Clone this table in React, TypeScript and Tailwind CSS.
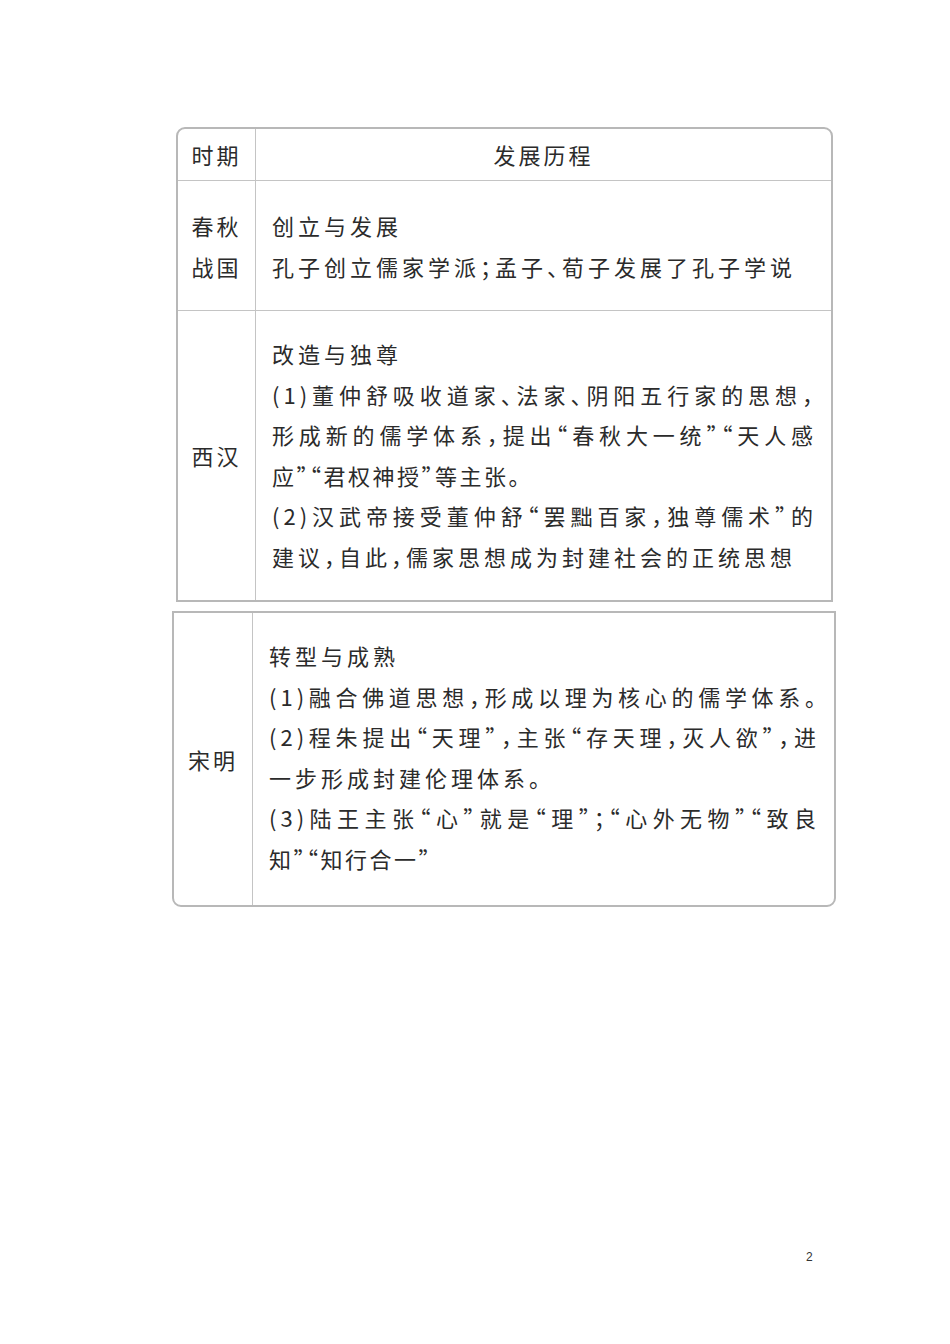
import React from 'react';

const font = "font-['Noto_Sans_CJK_SC',sans-serif] [font-feature-settings:'halt']";

// full lines are justified edge to edge, the last line of a paragraph is not
const Full = ({ children }: { children: React.ReactNode }) => (
  <div className="text-justify [text-align-last:justify]">{children}</div>
);
const Line = ({ children, tight }: { children: React.ReactNode; tight?: boolean }) => (
  <div className={tight ? 'tracking-[2.5px]' : ''}>{children}</div>
);

export default function App() {
  return (
    <div className={`w-[950px] h-[1344px] bg-white relative text-[#2b2b2b] ${font}`}>
      <div className="pt-[127px]">
        {/* first table */}
        <div className="ml-[176px] w-[657px] border-2 border-[#b8b8b8] rounded-t-[9px] text-[22px] tracking-[4px] leading-[40.5px]">
          <div className="grid grid-cols-[78px_1fr] border-b-[1.5px] border-[#c4c4c4]">
            <div className="border-r-[1.5px] border-[#c4c4c4] h-[51px] flex items-center justify-center tracking-[3px]">时期</div>
            <div className="flex items-center justify-center tracking-[3px]">发展历程</div>
          </div>
          <div className="grid grid-cols-[78px_1fr] border-b-[1.5px] border-[#c4c4c4]">
            <div className="border-r-[1.5px] border-[#c4c4c4] flex flex-col items-center justify-center tracking-[3px]">
              <div>春秋</div>
              <div>战国</div>
            </div>
            <div className="pl-[16px] pr-[14px] pt-[24px] pb-[24px]">
              <Line>创立与发展</Line>
              <Line>孔子创立儒家学派；孟子、荀子发展了孔子学说</Line>
            </div>
          </div>
          <div className="grid grid-cols-[78px_1fr]">
            <div className="border-r-[1.5px] border-[#c4c4c4] flex items-center justify-center tracking-[3px]">西汉</div>
            <div className="pl-[16px] pr-[14px] pt-[22px] pb-[24px]">
              <Line>改造与独尊</Line>
              <Full>(1)董仲舒吸收道家、法家、阴阳五行家的思想，</Full>
              <Full>形成新的儒学体系，提出“春秋大一统”“天人感</Full>
              <Line tight>应”“君权神授”等主张。</Line>
              <Full>(2)汉武帝接受董仲舒“罢黜百家，独尊儒术”的</Full>
              <Line>建议，自此，儒家思想成为封建社会的正统思想</Line>
            </div>
          </div>
        </div>

        {/* second table */}
        <div className="mt-[9px] ml-[172px] w-[664px] border-2 border-[#b8b8b8] rounded-b-[9px] text-[22px] tracking-[4px] leading-[40.5px]">
          <div className="grid grid-cols-[79px_1fr]">
            <div className="border-r-[1.5px] border-[#c4c4c4] flex items-center justify-center tracking-[3px]">宋明</div>
            <div className="pl-[16px] pr-[14px] pt-[22px] pb-[27px]">
              <Line>转型与成熟</Line>
              <Full>(1)融合佛道思想，形成以理为核心的儒学体系。</Full>
              <Full>(2)程朱提出“天理”，主张“存天理，灭人欲”，进</Full>
              <Line>一步形成封建伦理体系。</Line>
              <Full>(3)陆王主张“心”就是“理”；“心外无物”“致良</Full>
              <Line tight>知”“知行合一”</Line>
            </div>
          </div>
        </div>
      </div>

      {/* page number */}
      <div className="absolute left-[806px] top-[1248px] text-[12px] font-['Liberation_Sans',sans-serif] text-[#333]">2</div>
    </div>
  );
}
